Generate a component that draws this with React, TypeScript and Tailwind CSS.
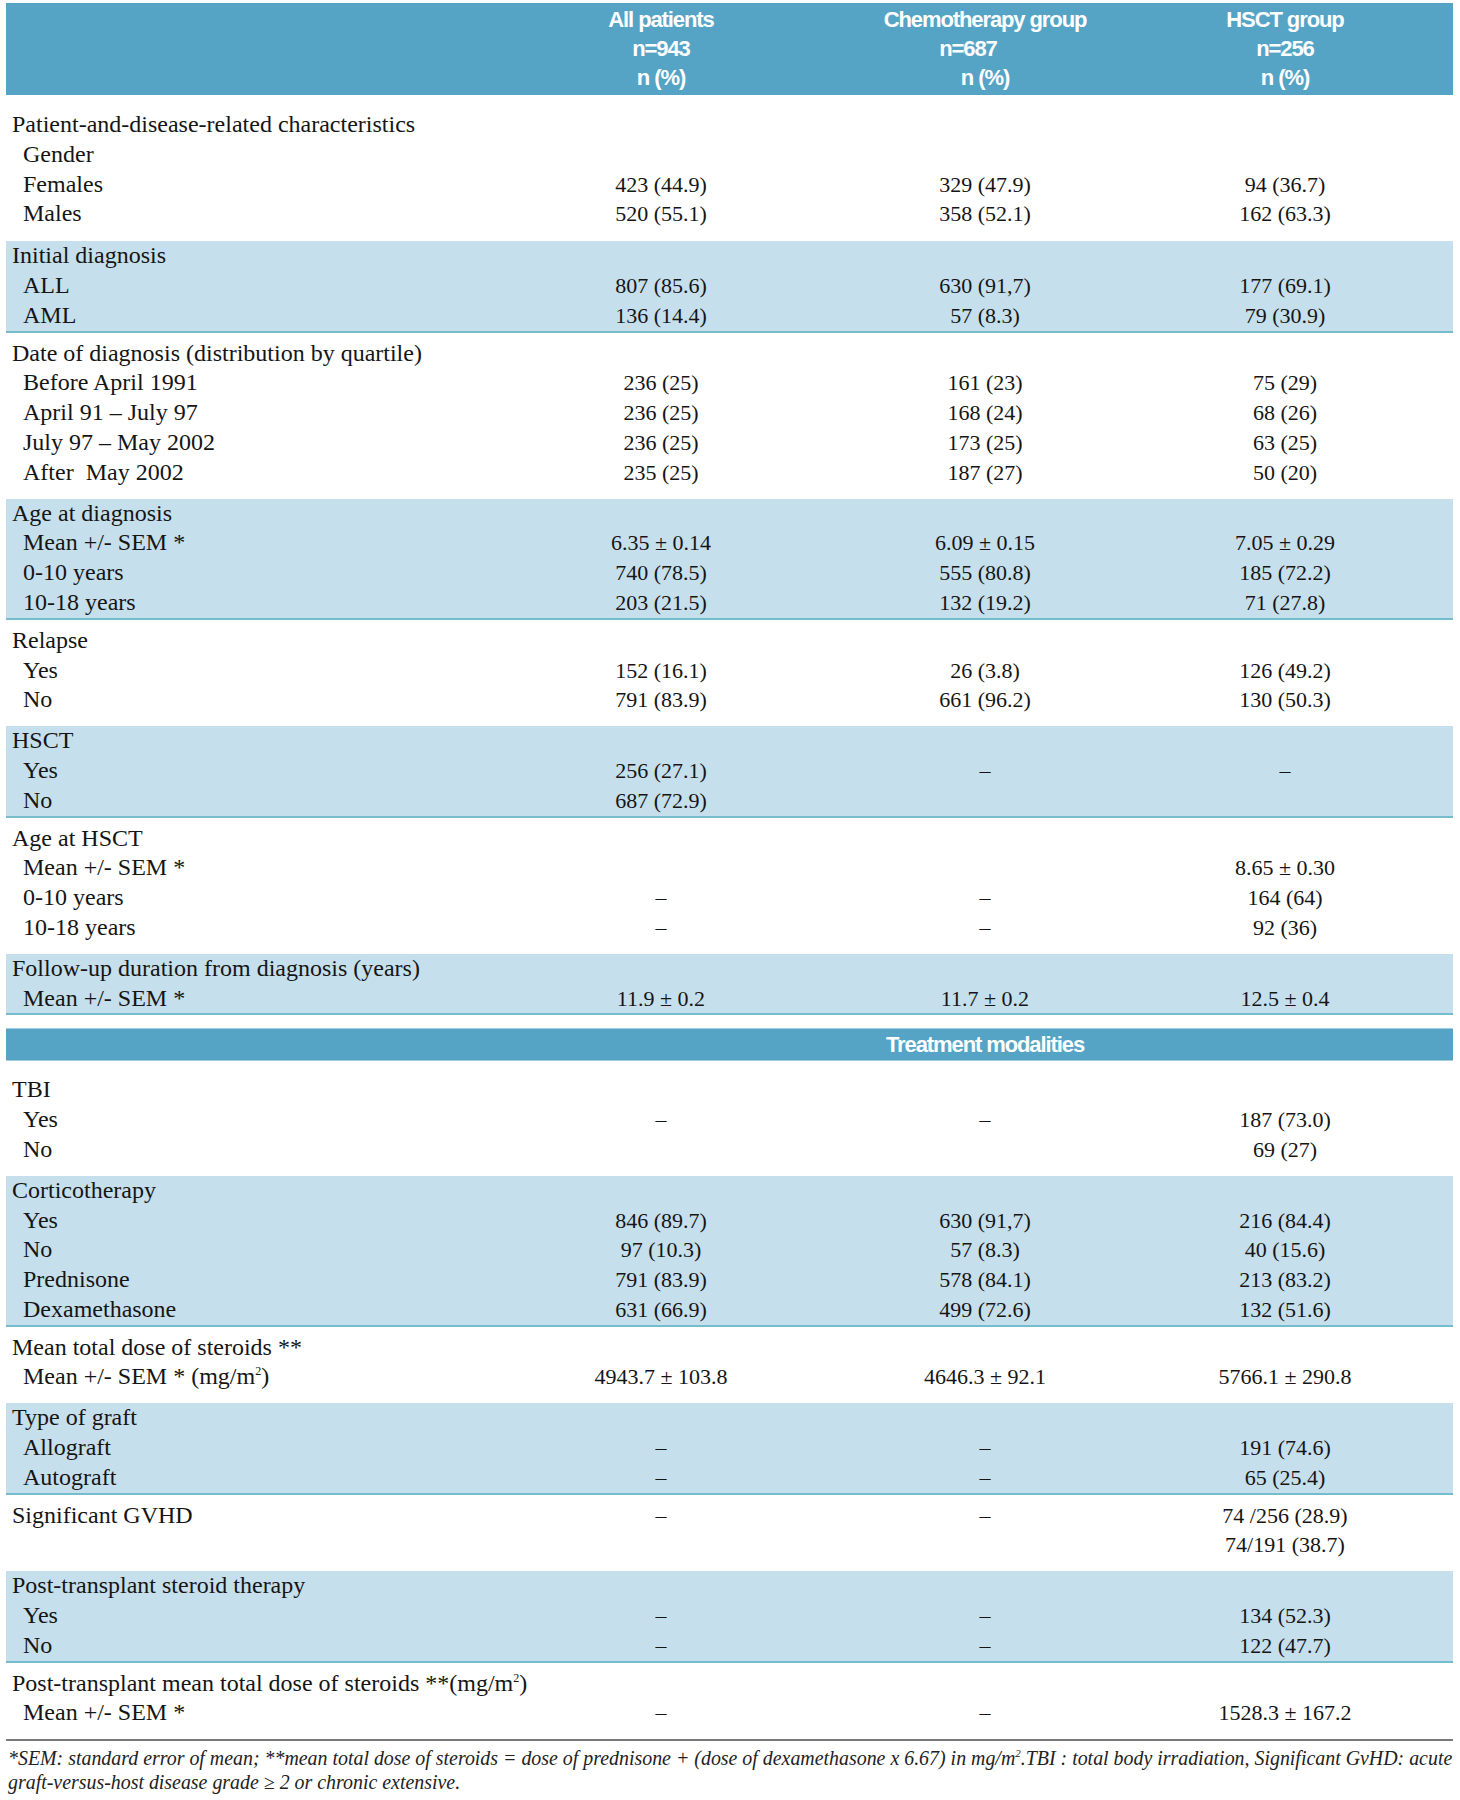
import type { ReactNode } from 'react';

type Line = {
  label?: ReactNode;
  sub?: boolean;
  a?: ReactNode;
  b?: ReactNode;
  c?: ReactNode;
};

type Group = {
  shaded?: boolean;
  lines: Line[];
};

const DASH = '–';

const sq = (
  <>
    (mg/m<sup className="text-[12px] top-[-9px]">2</sup>)
  </>
);

const patientGroups: Group[] = [
  {
    lines: [
      { label: 'Patient-and-disease-related characteristics' },
      { label: 'Gender', sub: true },
      { label: 'Females', sub: true, a: '423 (44.9)', b: '329 (47.9)', c: '94 (36.7)' },
      { label: 'Males', sub: true, a: '520 (55.1)', b: '358 (52.1)', c: '162 (63.3)' },
    ],
  },
  {
    shaded: true,
    lines: [
      { label: 'Initial diagnosis' },
      { label: 'ALL', sub: true, a: '807 (85.6)', b: '630 (91,7)', c: '177 (69.1)' },
      { label: 'AML', sub: true, a: '136 (14.4)', b: '57 (8.3)', c: '79 (30.9)' },
    ],
  },
  {
    lines: [
      { label: 'Date of diagnosis (distribution by quartile)' },
      { label: 'Before April 1991', sub: true, a: '236 (25)', b: '161 (23)', c: '75 (29)' },
      { label: 'April 91 – July 97', sub: true, a: '236 (25)', b: '168 (24)', c: '68 (26)' },
      { label: 'July 97 – May 2002', sub: true, a: '236 (25)', b: '173 (25)', c: '63 (25)' },
      { label: 'After\u00a0 May 2002', sub: true, a: '235 (25)', b: '187 (27)', c: '50 (20)' },
    ],
  },
  {
    shaded: true,
    lines: [
      { label: 'Age at diagnosis' },
      { label: 'Mean +/- SEM *', sub: true, a: '6.35 ± 0.14', b: '6.09 ± 0.15', c: '7.05 ± 0.29' },
      { label: '0-10 years', sub: true, a: '740 (78.5)', b: '555 (80.8)', c: '185 (72.2)' },
      { label: '10-18 years', sub: true, a: '203 (21.5)', b: '132 (19.2)', c: '71 (27.8)' },
    ],
  },
  {
    lines: [
      { label: 'Relapse' },
      { label: 'Yes', sub: true, a: '152 (16.1)', b: '26 (3.8)', c: '126 (49.2)' },
      { label: 'No', sub: true, a: '791 (83.9)', b: '661 (96.2)', c: '130 (50.3)' },
    ],
  },
  {
    shaded: true,
    lines: [
      { label: 'HSCT' },
      { label: 'Yes', sub: true, a: '256 (27.1)', b: DASH, c: DASH },
      { label: 'No', sub: true, a: '687 (72.9)' },
    ],
  },
  {
    lines: [
      { label: 'Age at HSCT' },
      { label: 'Mean +/- SEM *', sub: true, c: '8.65 ± 0.30' },
      { label: '0-10 years', sub: true, a: DASH, b: DASH, c: '164 (64)' },
      { label: '10-18 years', sub: true, a: DASH, b: DASH, c: '92 (36)' },
    ],
  },
  {
    shaded: true,
    lines: [
      { label: 'Follow-up duration from diagnosis (years)' },
      { label: 'Mean +/- SEM *', sub: true, a: '11.9 ± 0.2', b: '11.7 ± 0.2', c: '12.5 ± 0.4' },
    ],
  },
];

const treatmentGroups: Group[] = [
  {
    lines: [
      { label: 'TBI' },
      { label: 'Yes', sub: true, a: DASH, b: DASH, c: '187 (73.0)' },
      { label: 'No', sub: true, c: '69 (27)' },
    ],
  },
  {
    shaded: true,
    lines: [
      { label: 'Corticotherapy' },
      { label: 'Yes', sub: true, a: '846 (89.7)', b: '630 (91,7)', c: '216 (84.4)' },
      { label: 'No', sub: true, a: '97 (10.3)', b: '57 (8.3)', c: '40 (15.6)' },
      { label: 'Prednisone', sub: true, a: '791 (83.9)', b: '578 (84.1)', c: '213 (83.2)' },
      { label: 'Dexamethasone', sub: true, a: '631 (66.9)', b: '499 (72.6)', c: '132 (51.6)' },
    ],
  },
  {
    lines: [
      { label: 'Mean total dose of steroids **' },
      {
        label: <>Mean +/- SEM * {sq}</>,
        sub: true,
        a: '4943.7 ± 103.8',
        b: '4646.3 ± 92.1',
        c: '5766.1 ± 290.8',
      },
    ],
  },
  {
    shaded: true,
    lines: [
      { label: 'Type of graft' },
      { label: 'Allograft', sub: true, a: DASH, b: DASH, c: '191 (74.6)' },
      { label: 'Autograft', sub: true, a: DASH, b: DASH, c: '65 (25.4)' },
    ],
  },
  {
    lines: [
      { label: 'Significant GVHD', a: DASH, b: DASH, c: '74 /256 (28.9)' },
      { c: '74/191 (38.7)' },
    ],
  },
  {
    shaded: true,
    lines: [
      { label: 'Post-transplant steroid therapy' },
      { label: 'Yes', sub: true, a: DASH, b: DASH, c: '134 (52.3)' },
      { label: 'No', sub: true, a: DASH, b: DASH, c: '122 (47.7)' },
    ],
  },
  {
    lines: [
      { label: <>Post-transplant mean total dose of steroids **{sq}</> },
      { label: 'Mean +/- SEM *', sub: true, a: DASH, b: DASH, c: '1528.3 ± 167.2' },
    ],
  },
];

function Row({ line }: { line: Line }) {
  return (
    <div className="grid grid-cols-[494px_322px_326px_274px] leading-[29.8px] text-[22px]">
      <div
        className={
          line.sub
            ? 'pl-[17px] whitespace-nowrap text-[24px]'
            : 'pl-[6px] whitespace-nowrap text-[24px]'
        }
      >
        {line.label ?? '\u00a0'}
      </div>
      <div className="text-center">{line.a}</div>
      <div className="text-center">{line.b}</div>
      <div className="text-center">{line.c}</div>
    </div>
  );
}

function GroupBlock({ group, first }: { group: Group; first?: boolean }) {
  const cls = group.shaded
    ? 'bg-[#c6dfec] border-b-2 border-[#76bccc]'
    : first
      ? 'pt-[15px] pb-[12px]'
      : 'pt-[6px] pb-[11px]';
  return (
    <div className={cls}>
      {group.lines.map((line, i) => (
        <Row key={i} line={line} />
      ))}
    </div>
  );
}

export default function App() {
  const sans = "font-['Liberation_Sans_Narrow','Liberation_Sans',Arial,sans-serif] tracking-[-1.1px]";
  return (
    <div className="w-[1460px] min-h-[1800px] bg-white pt-[3px] pl-[6px] font-['Liberation_Serif','Times_New_Roman',serif] text-[22px] text-[#151515]">
      <div className="w-[1447px]">
        {/* Header */}
        <div className={`bg-[#55a4c5] text-white font-bold leading-[29px] pt-[2px] pb-[3px] ${sans}`}>
          <div className="grid grid-cols-[494px_322px_326px_274px]">
            <div />
            <div className="text-center">
              <div>All patients</div>
              <div>n=943</div>
              <div>n (%)</div>
            </div>
            <div className="text-center">
              <div>Chemotherapy group</div>
              <div className="pr-[34px]">n=687</div>
              <div>n (%)</div>
            </div>
            <div className="text-center">
              <div>HSCT group</div>
              <div>n=256</div>
              <div>n (%)</div>
            </div>
          </div>
        </div>

        {patientGroups.map((g, i) => (
          <GroupBlock key={i} group={g} first={i === 0} />
        ))}

        {/* Treatment modalities band */}
        <div
          className={`mt-[13px] h-[33px] bg-[#55a4c5] border-y border-[#9fd0e0] text-white font-bold leading-[31px] ${sans}`}
        >
          <div className="grid grid-cols-[494px_322px_326px_274px]">
            <div />
            <div />
            <div className="text-center">Treatment modalities</div>
          </div>
        </div>

        <div className="pt-[14px] pb-[11px]">
          {treatmentGroups[0].lines.map((line, i) => (
            <Row key={i} line={line} />
          ))}
        </div>
        {treatmentGroups.slice(1).map((g, i) => (
          <GroupBlock key={i} group={g} />
        ))}

        {/* Footnote */}
        <div className="border-t-2 border-[#7a7a7a] pt-[5px] italic text-[19.9px] leading-[24px] text-[#222]">
          <div className="whitespace-nowrap pl-[2px]">
            *SEM: standard error of mean; **mean total dose of steroids = dose of prednisone + (dose of dexamethasone x 6.67) in
            mg/m<sup className="text-[11px] top-[-8px]">2</sup>.TBI : total body irradiation, Significant GvHD: acute
          </div>
          <div className="pl-[2px]">graft-versus-host disease grade ≥ 2 or chronic extensive.</div>
        </div>
      </div>
    </div>
  );
}
